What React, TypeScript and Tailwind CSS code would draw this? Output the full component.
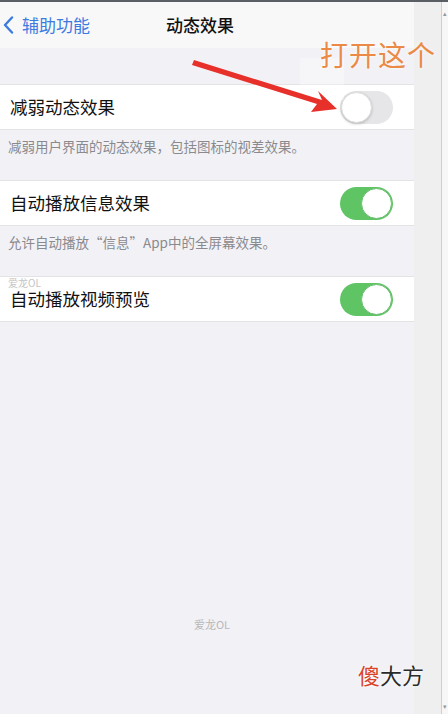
import React from 'react';

const font = '"PingFang SC", "Noto Sans CJK SC", "Liberation Sans", sans-serif';

function Toggle({ on }: { on: boolean }) {
  if (on) {
    return (
      <div className="relative h-[33px] w-[53px] rounded-full bg-[#5ec464]">
        <div className="absolute right-[1px] top-[1px] h-[31px] w-[31px] rounded-full border-[1.5px] border-[#6bbf70] bg-white" />
      </div>
    );
  }
  return (
    <div className="relative h-[33px] w-[53px] rounded-full bg-[#e6e6e8]">
      <div className="absolute left-[1px] top-[1px] h-[31px] w-[31px] rounded-full border border-[#dcdcdc] bg-white shadow-[0_1px_3px_rgba(0,0,0,0.2)]" />
    </div>
  );
}

function Row({ label, on, mark }: { label: string; on: boolean; mark?: boolean }) {
  return (
    <div className="relative flex h-[46px] items-center justify-between border-y border-[#e3e3e6] bg-white pl-[10px] pr-[21px]">
      {mark && (
        <span className="absolute left-[8px] top-[1px] text-[10px] leading-none text-[#c4c4c4]">爱龙OL</span>
      )}
      <span className="text-[17.5px] leading-none text-[#111]">{label}</span>
      <Toggle on={on} />
    </div>
  );
}

export default function App() {
  return (
    <div className="relative h-[714px] w-[448px] overflow-hidden bg-[#f2f2f6]" style={{ fontFamily: font }}>
      <div className="h-[2px] bg-[#5a5f66]" />
      <div className="flex h-[712px]">
        <div className="flex w-[414px] flex-col">
          <div className="flex h-[46px] items-center bg-[#f8f8f9]">
            <div className="flex w-[120px] items-center pl-[3px] text-[#3d7be0]">
              <svg width="11" height="18" viewBox="0 0 11 18" fill="none">
                <path d="M9 1.5L2 9l7 7.5" stroke="#3d7be0" strokeWidth="2.4" strokeLinecap="round" strokeLinejoin="round" />
              </svg>
              <span className="ml-[8px] text-[17px]">辅助功能</span>
            </div>
            <div className="ml-[46px] text-[17px] font-medium text-[#111]">动态效果</div>
          </div>
          <div className="h-[36px]" />
          <Row label="减弱动态效果" on={false} />
          <div className="h-[50px] px-[8px] pt-[6px] text-[13.5px] text-[#8a8a8e]">减弱用户界面的动态效果，包括图标的视差效果。</div>
          <Row label="自动播放信息效果" on={true} />
          <div className="h-[50px] px-[8px] pt-[6px] text-[13.5px] text-[#8a8a8e]">允许自动播放“信息”App中的全屏幕效果。</div>
          <Row label="自动播放视频预览" on={true} mark />
          <div className="flex flex-1 flex-col items-center">
            <div className="mt-[294px] ml-[10px] text-[11px] text-[#b8b8b8]">爱龙OL</div>
          </div>
        </div>
        <div className="w-[27px] bg-[#efefef]" />
        <div className="w-[1px] bg-[#cfcfcf]" />
        <div className="relative flex-1 bg-[#f7f7f7]">
          <span className="absolute left-[1px] top-[8px] text-[7px] leading-none text-[#999]">▴</span>
          <span className="absolute bottom-[4px] left-[1px] text-[7px] leading-none text-[#999]">▾</span>
        </div>
      </div>

      {/* annotation */}
      <div className="absolute left-[300px] top-[58px] h-[42px] w-[44px] bg-white/30" />
      <div className="absolute left-[320px] top-[40px] text-[28px] leading-none tracking-[1px] text-[#ea8a46] [text-shadow:0_0_3px_#fff]">打开这个</div>
      <svg className="absolute left-0 top-0" width="448" height="714">
        <polygon points="194,60 322,100 318,91 337,109 311,112 317,104 192,65" fill="#e8302b" />
      </svg>

      <div className="absolute left-[358px] top-[663px] text-[22px] leading-none [text-shadow:0_0_3px_#fff,0_0_2px_#fff]">
        <span className="text-[#d8432a]">傻</span>
        <span className="text-[#2b2b2b]">大方</span>
      </div>
    </div>
  );
}
